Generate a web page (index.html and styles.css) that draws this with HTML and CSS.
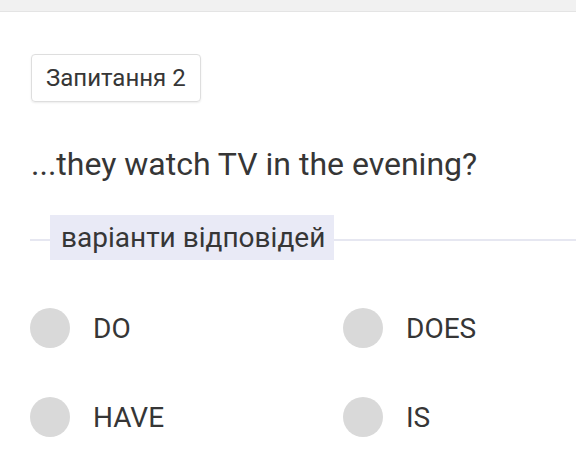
FILE: index.html
```html
<!DOCTYPE html>
<html>
<head>
<meta charset="utf-8">
<link rel="stylesheet" href="styles.css">
</head>
<body>
<div class="topbar"></div>
<main class="content">
  <div class="badge">Запитання 2</div>
  <p class="question">...they watch TV in the evening?</p>
  <div class="divider"><span class="label">варіанти відповідей</span></div>
  <div class="options">
    <div class="option"><span class="dot"></span><span class="opt-text">DO</span></div>
    <div class="option"><span class="dot"></span><span class="opt-text">DOES</span></div>
    <div class="option"><span class="dot"></span><span class="opt-text">HAVE</span></div>
    <div class="option"><span class="dot"></span><span class="opt-text">IS</span></div>
  </div>
</main>
</body>
</html>
```
FILE: styles.css
```css
html, body {
  margin: 0;
  padding: 0;
  background: #ffffff;
}
body {
  font-family: Roboto, "Liberation Sans", sans-serif;
  color: #363636;
  width: 576px;
  height: 468px;
  overflow: hidden;
}
.topbar {
  height: 11px;
  background: #f1f1f1;
  border-bottom: 1px solid #e4e4e4;
}
.content {
  padding: 42px 0 0 30px;
}
.badge {
  display: inline-flex;
  align-items: center;
  height: 46px;
  padding: 0 14px;
  margin-left: 1px;
  border: 1px solid #dedede;
  border-radius: 4px;
  box-shadow: 0 1px 2px rgba(0,0,0,0.08);
  font-size: 24px;
  box-sizing: content-box;
}
.question {
  margin: 43px 0 0 1px;
  font-size: 32px;
  line-height: 38px;
}
.divider {
  margin-top: 32px;
  height: 45px;
  display: flex;
  align-items: center;
  background: linear-gradient(#e6e7f1, #e6e7f1) no-repeat 0 24px / 100% 2px;
}
.label {
  margin-left: 20px;
  height: 45px;
  display: flex;
  align-items: center;
  padding: 0 9px 0 11px;
  background: #e9eaf6;
  font-size: 28px;
}
.options {
  margin-top: 48px;
  display: grid;
  grid-template-columns: 313px 1fr;
  row-gap: 49px;
}
.option {
  display: flex;
  align-items: center;
  height: 40px;
}
.dot {
  width: 40px;
  height: 40px;
  border-radius: 50%;
  background: #d9d9d9;
  flex: none;
}
.opt-text {
  margin-left: 23px;
  font-size: 28px;
}
```
